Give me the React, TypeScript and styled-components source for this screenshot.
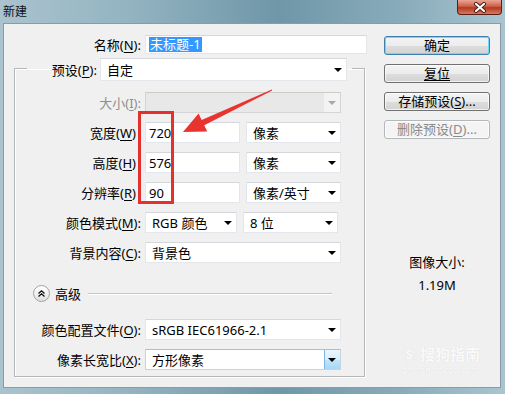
import React from 'react'
import styled, { createGlobalStyle } from 'styled-components'

const GlobalStyle = createGlobalStyle`
  html, body { margin: 0; padding: 0; }
  body { font-family: "Noto Sans", "Noto Sans CJK SC", sans-serif; color: #000; }
`

const Window = styled.div`
  position: relative;
  width: 505px;
  height: 394px;
  display: flex;
  flex-direction: column;
  overflow: hidden;
  background: linear-gradient(90deg, #aac3ce 0%, #94b4c2 25%, #6f97a8 55%, #89acbb 80%, #a8c5d0 100%);
`

const TitleBar = styled.div`
  height: 23px;
  flex-shrink: 0;
  display: flex;
  align-items: flex-start;
`

const Title = styled.div`
  font-family: "Noto Sans CJK SC", sans-serif;
  font-size: 12px;
  line-height: 22px;
  padding-left: 3px;
  color: #111;
`

const CloseButton = styled.div`
  margin-left: auto;
  margin-right: 3px;
  width: 45px;
  height: 15px;
  box-sizing: border-box;
  border: 1px solid #5c1d15;
  border-top: none;
  border-radius: 0 0 4px 4px;
  background: linear-gradient(#e8a696, #cd6049 45%, #b4381f 55%, #d47d5f);
  display: flex;
  align-items: center;
  justify-content: center;
`

const Body = styled.div`
  position: relative;
  flex: 1;
  margin: 0 4px 6px 3px;
  border: 1px solid #8b9aa3;
  background: #f0f0f0;
  display: flex;
`

const Main = styled.div`
  width: 366px;
  padding-top: 11px;
  display: flex;
  flex-direction: column;
`

const NameRow = styled.div`
  display: flex;
  align-items: center;
  gap: 4px;
`

const Label = styled.span<{ $w?: number; $bare?: boolean; $disabled?: boolean }>`
  width: ${p => p.$w ?? 126}px;
  box-sizing: border-box;
  padding-right: ${p => (p.$bare ? 5 : 0)}px;
  text-align: right;
  font-size: 13px;
  line-height: 18px;
  white-space: nowrap;
  color: ${p => (p.$disabled ? '#8e8e8e' : '#000')};
`

const Key = styled.span`
  text-decoration: underline;
  text-underline-offset: 2px;
`

const TextField = styled.div<{ $w: number; $h?: number }>`
  box-sizing: border-box;
  width: ${p => p.$w}px;
  height: ${p => p.$h ?? 21}px;
  padding-left: 3px;
  display: flex;
  align-items: center;
  background: #fff;
  border: 1px solid #e3e7eb;
  border-top-color: #d4d8dc;
  font-size: 13px;
`

const Selected = styled.span`
  background: #3399ff;
  color: #fff;
  line-height: 15px;
  padding: 0 1px;
`

const Combo = styled.div<{ $w: number; $h?: number; $disabled?: boolean; $hot?: boolean }>`
  box-sizing: border-box;
  width: ${p => p.$w}px;
  height: ${p => p.$h ?? 21}px;
  padding-left: 6px;
  display: flex;
  align-items: center;
  background: ${p => (p.$disabled ? '#e8e8e8' : '#fff')};
  border: 1px solid ${p => (p.$disabled ? '#d4d4d4' : p.$hot ? '#c4d4e2' : '#e3e7eb')};
  border-top-color: ${p => (p.$disabled ? '#cccccc' : p.$hot ? '#a9bfd3' : '#d4d8dc')};
  font-size: 13px;
  white-space: nowrap;
`

const Arrow = styled.span<{ $disabled?: boolean; $hot?: boolean }>`
  margin-left: auto;
  width: 16px;
  align-self: stretch;
  box-sizing: border-box;
  display: flex;
  align-items: center;
  justify-content: center;
  background: ${p =>
    p.$hot ? 'linear-gradient(#eaf6fd, #d7effc 50%, #bde6fd 51%, #a6d9f4)' : p.$disabled ? '#f3f3f3' : 'transparent'};
  border-left: 1px solid ${p => (p.$hot ? '#7eb4ea' : 'transparent')};
  &::after {
    content: '';
    border-left: 4px solid transparent;
    border-right: 4px solid transparent;
    border-top: 4px solid ${p => (p.$disabled ? '#a8a8a8' : '#000')};
    margin-right: 2px;
  }
`

const Group = styled.fieldset`
  margin: 1px 0 0 10px;
  width: 351px;
  box-sizing: border-box;
  min-inline-size: 0;
  padding: 11px 0 6px 0;
  border: 1px solid #b4b8bb;
  box-shadow: 1px 1px 0 #fff, inset 1px 1px 0 #fff;
  display: flex;
  flex-direction: column;
  gap: 9px;
`

const Legend = styled.legend`
  margin-left: 12px;
  padding: 3px 5px 0 0;
  display: flex;
  align-items: center;
  gap: 3px;
`

const Row = styled.div<{ $mt?: number }>`
  display: flex;
  align-items: center;
  gap: 4px;
  margin-top: ${p => p.$mt ?? 0}px;
`

const Pair = styled.div`
  display: flex;
  gap: 6px;
`

const Advanced = styled.div`
  height: 18px;
  margin: 12px 32px 0 0;
  padding-left: 18px;
  display: flex;
  align-items: center;
  gap: 5px;
  font-size: 13px;
`

const Toggle = styled.span`
  width: 17px;
  height: 17px;
  box-sizing: border-box;
  border-radius: 50%;
  border: 1px solid #a3a3a3;
  background: linear-gradient(#ffffff, #f1f1f1 50%, #dedede);
  display: flex;
  align-items: center;
  justify-content: center;
`

const Rule = styled.span`
  flex: 1;
  height: 1px;
  margin-left: 2px;
  background: #c3c5c7;
  box-shadow: 0 1px 0 #fff;
`

const Side = styled.div`
  flex: 1;
  padding: 12px 0 0 14px;
  display: flex;
  flex-direction: column;
`

const ButtonStack = styled.div`
  display: flex;
  flex-direction: column;
  gap: 9px;
`

const Button = styled.div<{ $primary?: boolean; $disabled?: boolean }>`
  width: 106px;
  height: 19px;
  box-sizing: border-box;
  border-radius: 3px;
  border: 1px solid ${p => (p.$primary ? '#3c7fb1' : p.$disabled ? '#b3b7ba' : '#707070')};
  background: ${p =>
    p.$disabled ? '#f4f4f4' : 'linear-gradient(#f4f4f4 0%, #ececec 50%, #dedede 51%, #d2d2d2 100%)'};
  box-shadow: ${p => (p.$primary ? 'inset 0 0 0 1px #74d6f6' : 'inset 0 0 0 1px rgba(255,255,255,0.7)')};
  color: ${p => (p.$disabled ? '#8a8a8a' : '#000')};
  font-size: 13px;
  line-height: 17px;
  text-align: center;
  white-space: nowrap;
`

const Info = styled.div`
  width: 106px;
  margin-top: 113px;
  display: flex;
  flex-direction: column;
  gap: 3px;
  align-items: center;
  font-size: 13px;
  line-height: 20px;
`

const Watermark = styled.div`
  position: absolute;
  right: 20px;
  bottom: 12px;
  display: flex;
  flex-direction: column;
  align-items: center;
  color: rgba(255, 255, 255, 0.9);
  text-shadow: 0 0 1px rgba(0, 0, 0, 0.12);
  font-family: "Noto Sans CJK SC", sans-serif;
`

const MarkTitle = styled.div`
  font-size: 15px;
  font-weight: bold;
  line-height: 20px;
`

const MarkUrl = styled.div`
  font-size: 9px;
  line-height: 11px;
`

const Overlay = styled.svg`
  position: absolute;
  left: 0;
  top: 0;
  pointer-events: none;
`

const App = () => {
  return (
    <Window>
      <GlobalStyle />
      <TitleBar>
        <Title>新建</Title>
        <CloseButton>
          <svg width="14" height="11" viewBox="0 0 14 11">
            <path d="M3 2 L11 9 M11 2 L3 9" stroke="#4a1a12" strokeWidth="4" strokeLinecap="round" />
            <path d="M3 2 L11 9 M11 2 L3 9" stroke="#fff" strokeWidth="2.2" strokeLinecap="round" />
          </svg>
        </CloseButton>
      </TitleBar>
      <Body>
        <Main>
          <NameRow>
            <Label $w={137}>名称(<Key>N</Key>):</Label>
            <TextField $w={222} $h={19}>
              <Selected>未标题-1</Selected>
            </TextField>
          </NameRow>
          <Group>
            <Legend>
              <Label $w={70}>预设(<Key>P</Key>):</Label>
              <Combo $w={247} $h={23}>
                自定
                <Arrow />
              </Combo>
            </Legend>
            <Row>
              <Label $disabled>大小(<Key>I</Key>):</Label>
              <Combo $w={196} $disabled>
                <Arrow $disabled />
              </Combo>
            </Row>
            <Row>
              <Label $bare>宽度(<Key>W</Key>)</Label>
              <Pair>
                <TextField $w={95}>720</TextField>
                <Combo $w={95}>像素<Arrow /></Combo>
              </Pair>
            </Row>
            <Row>
              <Label $bare>高度(<Key>H</Key>)</Label>
              <Pair>
                <TextField $w={95}>576</TextField>
                <Combo $w={95}>像素<Arrow /></Combo>
              </Pair>
            </Row>
            <Row>
              <Label $bare>分辨率(<Key>R</Key>)</Label>
              <Pair>
                <TextField $w={95}>90</TextField>
                <Combo $w={95}>像素/英寸<Arrow /></Combo>
              </Pair>
            </Row>
            <Row>
              <Label>颜色模式(<Key>M</Key>):</Label>
              <Pair>
                <Combo $w={92}>RGB 颜色<Arrow /></Combo>
                <Combo $w={95}>8 位<Arrow /></Combo>
              </Pair>
            </Row>
            <Row>
              <Label>背景内容(<Key>C</Key>):</Label>
              <Combo $w={196}>背景色<Arrow /></Combo>
            </Row>
            <Advanced>
              <Toggle>
                <svg width="9" height="9" viewBox="0 0 9 9">
                  <path d="M1.5 4.5 L4.5 1.8 L7.5 4.5 M1.5 7.5 L4.5 4.8 L7.5 7.5" stroke="#111" strokeWidth="1.3" fill="none" />
                </svg>
              </Toggle>
              高级
              <Rule />
            </Advanced>
            <Row $mt={8}>
              <Label>颜色配置文件(<Key>O</Key>):</Label>
              <Combo $w={196}>sRGB IEC61966-2.1<Arrow /></Combo>
            </Row>
            <Row>
              <Label>像素长宽比(<Key>X</Key>):</Label>
              <Combo $w={196} $hot>方形像素<Arrow $hot /></Combo>
            </Row>
          </Group>
        </Main>
        <Side>
          <ButtonStack>
            <Button $primary>确定</Button>
            <Button><Key>复位</Key></Button>
            <Button>存储预设(<Key>S</Key>)...</Button>
            <Button $disabled>删除预设(<Key>D</Key>)...</Button>
          </ButtonStack>
          <Info>
            <span>图像大小:</span>
            <span>1.19M</span>
          </Info>
        </Side>
        <Watermark>
          <MarkTitle>Ⓢ 搜狗指南</MarkTitle>
          <MarkUrl>zhinan.sogou.com</MarkUrl>
        </Watermark>
      </Body>
      <Overlay width="505" height="394" viewBox="0 0 505 394">
        <rect x="139.5" y="112.5" width="33" height="90" fill="none" stroke="#e5312d" strokeWidth="3" />
        <polygon
          points="183,132 198.6,113.6 201.6,119.9 271.8,89.5 272.2,90.5 204.2,125.3 207.2,131.6"
          fill="#e8332f"
        />
      </Overlay>
    </Window>
  )
}

export default App
